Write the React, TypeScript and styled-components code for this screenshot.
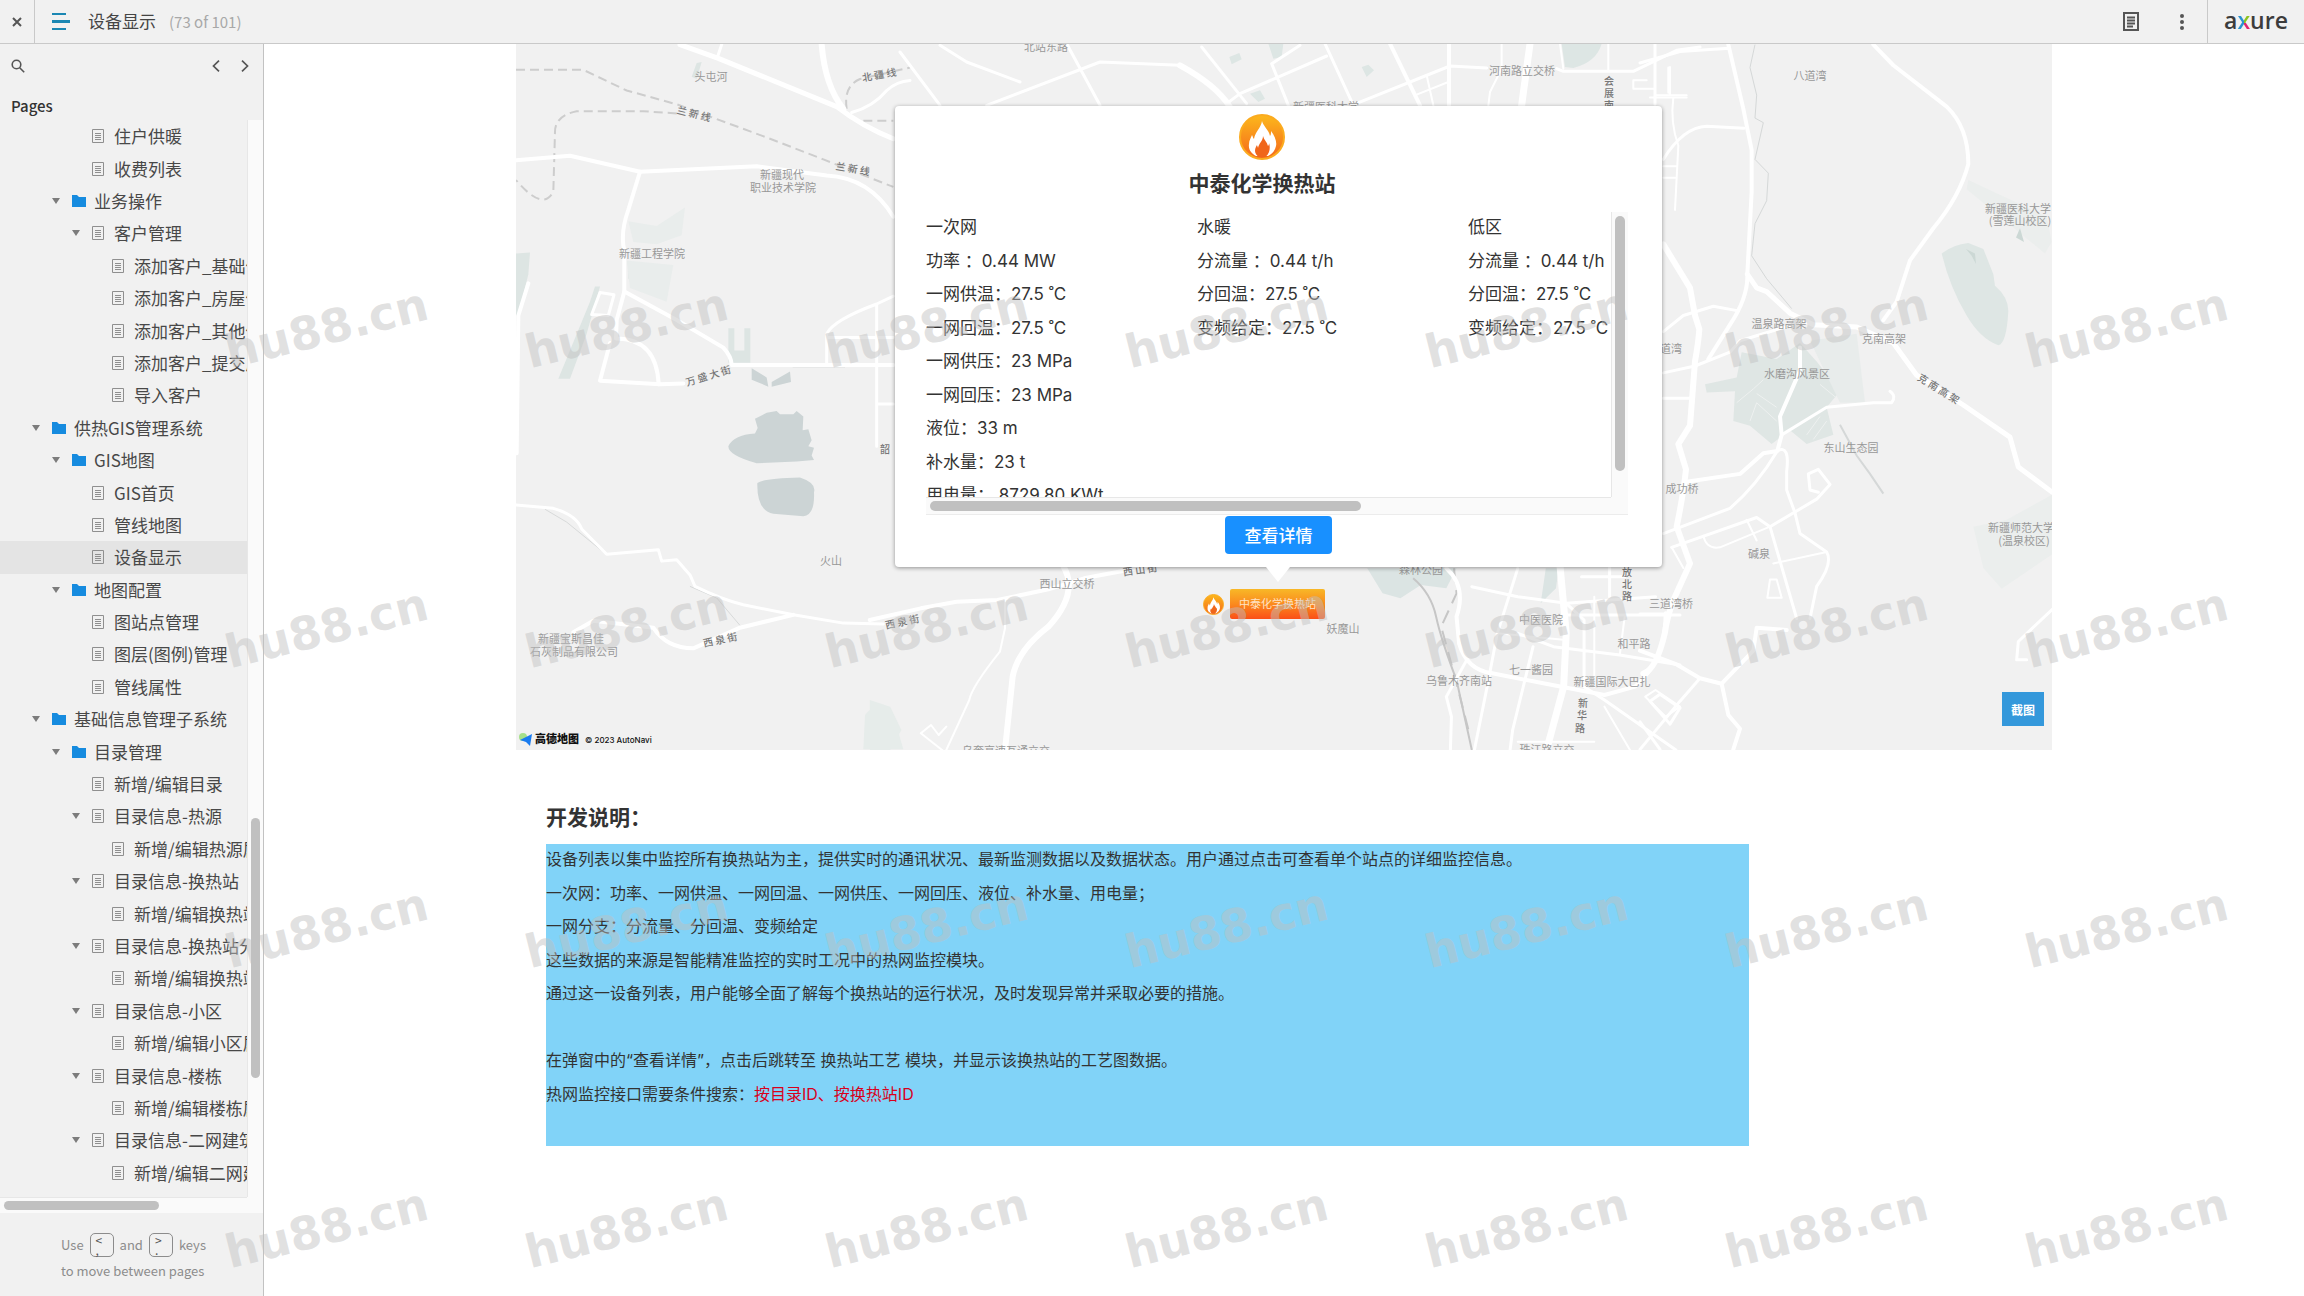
import React from "react";
import styled, { createGlobalStyle } from "styled-components";

const ui = `"Noto Sans CJK SC", "Noto Sans", sans-serif`;
const body = `Inter, "Noto Sans CJK SC", sans-serif`;

const Global = createGlobalStyle`
  *, *::before, *::after { box-sizing: border-box; }
  html, body { margin: 0; padding: 0; }
  body { background: #fff; color: #333; font-family: ${body}; }
  button { border: 0; padding: 0; margin: 0; background: none; font: inherit; color: inherit; cursor: pointer; }
  a { color: inherit; text-decoration: none; }
  h1, h2, h3, p, ul { margin: 0; padding: 0; }
  ul { list-style: none; }
  svg { display: block; }
`;

const Shell = styled.div`
  position: relative;
  display: flex;
  flex-direction: column;
  height: 100vh;
  overflow: hidden;
`;

/* ---------- top bar ---------- */
const TopBar = styled.header`
  display: flex;
  flex: none;
  height: 44px;
  background: #f1f1f1;
  border-bottom: 1px solid #c9c9c9;
  font-family: ${ui};
`;
const CloseButton = styled.button`
  width: 35px;
  display: grid;
  place-items: center;
  border-right: 1px solid #c9c9c9;
`;
const MenuButton = styled.button`
  display: grid;
  place-items: center;
  padding: 0 18px 0 17px;
`;
const PageTitle = styled.h1`
  font-size: 17px;
  line-height: 42px;
  font-weight: 400;
  color: #444;
`;
const PageCount = styled.span`
  margin-left: 13px;
  font-size: 15px;
  line-height: 44px;
  color: #a8a8a8;
`;
const Spacer = styled.div`
  flex: 1;
`;
const BarButton = styled.button`
  width: 51px;
  display: grid;
  place-items: center;
`;
const Logo = styled.a`
  width: 97px;
  border-left: 1px solid #c9c9c9;
  text-align: center;
  font-family: "Open Sans", sans-serif;
  font-size: 23px;
  line-height: 40px;
  font-weight: 600;
  color: #3c3c3c;
`;
const LogoMark = styled.span`
  color: transparent;
  background: conic-gradient(from 0deg at 50% 60%, #8cc220 0 90deg, #e0246f 90deg 180deg, #2a93cf 180deg);
  -webkit-background-clip: text;
  background-clip: text;
`;

/* ---------- sidebar ---------- */
const Columns = styled.div`
  flex: 1;
  min-height: 0;
  display: flex;
`;
const Sidebar = styled.aside`
  flex: none;
  width: 264px;
  display: flex;
  flex-direction: column;
  background: #f1f1f1;
  border-right: 1px solid #c2c2c2;
  font-family: ${ui};
  color: #484848;
`;
const Tools = styled.div`
  display: flex;
  align-items: center;
  height: 44px;
  margin-bottom: 3px;
  padding: 0 14px 0 11px;
`;
const IconButton = styled.button`
  display: grid;
  place-items: center;
  margin-left: 18px;
  &:first-child { margin-left: 0; }
`;
const SideHeading = styled.h2`
  padding-left: 11px;
  font-size: 15px;
  line-height: 29px;
  font-weight: 500;
  color: #333;
`;
const TreePane = styled.div`
  flex: 1;
  min-height: 0;
  display: grid;
  grid-template-columns: minmax(0, 1fr) 16px;
  grid-template-rows: minmax(0, 1fr) 16px;
`;
const Tree = styled.ul`
  display: grid;
  grid-auto-rows: minmax(0, 1fr);
  min-height: 0;
  padding-bottom: 8px;
  overflow: hidden;
`;
const Row = styled.li<{ $level: number; $active?: boolean }>`
  display: flex;
  align-items: center;
  padding-left: ${(p) => 12 + p.$level * 20}px;
  background: ${(p) => (p.$active ? "#e4e4e4" : "transparent")};
  overflow: hidden;
  white-space: nowrap;
`;
const Toggle = styled.button`
  width: 20px;
  flex: none;
`;
const TogglePlace = styled.span`
  width: 20px;
  flex: none;
`;
const PageLink = styled.a`
  display: flex;
  align-items: center;
  font-size: 17px;
  line-height: 32px;
`;
const RowIcon = styled.span`
  width: 22px;
  flex: none;
`;
const Track = styled.div<{ $dir: "v" | "h" }>`
  display: flex;
  flex-direction: ${(p) => (p.$dir === "v" ? "column" : "row")};
  background: #fafafa;
  border: 0 solid #e7e7e7;
  ${(p) => (p.$dir === "v" ? "border-left-width: 1px; padding: 4px 3px;" : "border-top-width: 1px; padding: 3px 4px;")}
`;
const Thumb = styled.div<{ $size: number }>`
  flex: ${(p) => p.$size};
  border-radius: 5px;
  background: #c0c0c0;
`;
const Gap = styled.div<{ $size: number }>`
  flex: ${(p) => p.$size};
`;
const Corner = styled.div`
  background: #fafafa;
`;
const Hint = styled.p`
  height: 83px;
  padding: 19px 0 0 61px;
  font-size: 13px;
  line-height: 26px;
  color: #8c8c8c;
`;
const HintLine = styled.span`
  display: flex;
  align-items: center;
  gap: 6px;
`;
const Key = styled.kbd`
  display: flex;
  flex-direction: column;
  width: 24px;
  height: 24px;
  padding: 1px 0 0 5px;
  border: 1px solid #8c8c8c;
  border-radius: 5px;
  font-family: ${ui};
  font-size: 12px;
  line-height: 10px;
  color: #555;
`;

/* ---------- page ---------- */
const Page = styled.main`
  flex: 1;
  min-width: 0;
  overflow: hidden;
`;
const Canvas = styled.div`
  width: 100%;
  max-width: 1536px;
  margin: 0 auto;
`;
const MapArea = styled.section`
  position: relative;
  height: 706px;
  overflow: hidden;
  background: #f1f1f1;
`;
const Popup = styled.article`
  position: absolute;
  left: 379px;
  top: 62px;
  width: 767px;
  height: 461px;
  padding: 8px 31px 0;
  display: flex;
  flex-direction: column;
  align-items: center;
  background: #fff;
  border-radius: 4px;
  box-shadow: 0 1px 4px rgba(0, 0, 0, 0.4);
  &::after {
    content: "";
    position: absolute;
    left: 50%;
    top: 100%;
    margin-left: -13px;
    border: 12px solid transparent;
    border-top: 15px solid #fff;
    border-bottom: 0;
  }
`;
const PopupHead = styled.header`
  display: flex;
  flex-direction: column;
  align-items: center;
  align-self: stretch;
  padding-right: 33px;
  height: 98px;
`;
const StationName = styled.h2`
  font-size: 21px;
  line-height: 48px;
  font-weight: 700;
`;
const Readings = styled.div`
  align-self: stretch;
  margin-right: 3px;
  display: grid;
  grid-template-columns: minmax(0, 1fr) 17px;
  grid-template-rows: 285px 17px;
  border-bottom: 1px solid #ececec;
`;
const Groups = styled.div`
  display: grid;
  grid-template-columns: 271px 271px 271px;
  overflow: hidden;
`;
const Group = styled.ul`
  display: grid;
  grid-template-rows: repeat(9, 1fr);
  height: 302px;
  font-size: 17px;
  line-height: 31px;
  white-space: pre;
`;
const DetailButton = styled.button`
  margin-top: 1px;
  width: 107px;
  flex: none;
  height: 38px;
  padding-bottom: 2px;
  border-radius: 4px;
  background: #1890ff;
  color: #fff;
  font-size: 17px;
  font-weight: 500;
`;
const Marker = styled.div`
  position: absolute;
  left: 687px;
  top: 545px;
  display: flex;
  align-items: center;
  gap: 6px;
`;
const MarkerLabel = styled.span`
  width: 95px;
  line-height: 30px;
  text-align: center;
  border-radius: 2px;
  background: linear-gradient(#f8b827, #fb8a1e 50%, #fb4f17);
  color: #ffe3c4;
  font-size: 11px;
`;
const CaptureButton = styled.button`
  position: absolute;
  right: 8px;
  bottom: 24px;
  width: 42px;
  height: 34px;
  background: #3498db;
  color: #fff;
  font-size: 12px;
  font-weight: 700;
`;
const Notes = styled.section`
  padding: 46px 0 0 30px;
`;
const NotesTitle = styled.h2`
  font-size: 21px;
  line-height: 44px;
  font-weight: 700;
  margin-bottom: 4px;
`;
const NotesBody = styled.div`
  display: grid;
  grid-template-rows: repeat(9, 1fr);
  max-width: 1203px;
  height: 302px;
  background: #81d3f8;
  font-size: 16px;
  line-height: 31px;
`;
const Alert = styled.span`
  color: #d9001b;
`;

/* ---------- watermark ---------- */
const Marks = styled.div`
  position: absolute;
  inset: 178px 0 0 176px;
  overflow: hidden;
  display: grid;
  grid-template-columns: repeat(auto-fill, 300px);
  grid-auto-rows: 300px;
  place-items: center;
  pointer-events: none;
`;
const Mark = styled.span`
  font-family: "DejaVu Sans", sans-serif;
  font-size: 46px;
  font-weight: 700;
  line-height: 1;
  color: rgba(192, 192, 192, 0.48);
  transform: rotate(-14deg);
`;

/* ---------- icons ---------- */
const PageGlyph = () => (
  <svg width="12" height="14" viewBox="0 0 12 14" fill="none" stroke="#8f8f8f">
    <path d="M.5.5h11v13H.5zM3 4.5h6M3 6.5h6M3 8.5h6M3 10.5h6" />
  </svg>
);
const FolderGlyph = () => (
  <svg width="14" height="12" viewBox="0 0 14 12" fill="#168bdf">
    <path d="M0 0h5l2 2h7v10H0z" />
  </svg>
);
const ArrowGlyph = () => (
  <svg width="8" height="6" viewBox="0 0 8 6" fill="#7c7c7c">
    <path d="M0 0h8L4 6z" />
  </svg>
);
const Flame = ({ size, id }: { size: number; id: string }) => (
  <svg width={size} height={size} viewBox="0 0 46 46">
    <defs>
      <linearGradient id={id} x1="0" y1="0" x2="0" y2="1">
        <stop offset="0" stopColor="#fcb81c" />
        <stop offset="1" stopColor="#f5671c" />
      </linearGradient>
    </defs>
    <circle cx="23" cy="23" r="22" fill={`url(#${id})`} stroke="#fbab1f" strokeWidth="2" />
    <path
      fill="#fff"
      d="M23 7c1 5 7 9 8 15 1-1 1-3 1-5 4 5 6 11 5 15-1 5-4 8-8 10H17c-4-2-8-6-7-12 0-4 2-6 3-9 1 2 1 3 2 4 1-7 7-11 8-18z"
    />
    <path
      fill="#f0661b"
      d="M24 22c1 4 4 6 5 10 1-1 1-2 1-3 1 3 1 6 0 9-1 2-2 4-4 5h-6c-2-1-4-4-4-6 0-3 1-4 2-6 0 1 1 2 1 3 1-5 5-7 5-12z"
    />
  </svg>
);

/* ---------- map drawing ---------- */
type Stroke = [string, number];
const westRoads: Stroke[] = [
  ["M510 10L625 40L980 145Q1060 190 1150 215", 5],
  ["M935 10Q945 100 1000 150", 6],
  ["M635 10L622 38M1025 158Q1090 145 1130 110Q1160 90 1200 88", 3],
  ["M18 262L180 252L390 287L740 275L950 295Q1080 300 1150 385", 4],
  ["M390 287L355 370Q330 420 343 460V548L320 610L318 650Q440 650 446 750", 4],
  ["M343 548L500 610L640 670Q665 690 665 708H1150", 4],
  ["M300 660L270 742L450 750L520 748", 4],
  ["M270 550L312 555L295 600L245 598Z", 3],
  ["M950 708V640Q970 610 1100 575L1150 558M950 648H1150M1100 575V885M1100 793H1150", 3],
  ["M55 530L25 600L20 900", 4],
  ["M18 1013L130 1020Q200 1035 215 1065L290 1120L445 1110L455 1135L500 1132L540 1165L555 1190Q640 1220 700 1230L850 1252L1000 1270L1120 1272", 3],
  ["M190 1290L250 1265L430 1280Q470 1325 550 1325L690 1280L850 1252", 4],
];
const eastRoads: Stroke[] = [
  ["M0 50L120 25L268 18M45 10V140", 3],
  ["M265 10L310 150L335 240V330L322 510Q325 560 270 620L205 695", 4],
  ["M70 260Q130 190 200 188L312 192", 3],
  ["M85 60V115M30 125H140M100 125Q90 180 115 230L105 370M70 275H110M70 300H105", 2],
  ["M700 10L760 55L920 145Q985 190 985 270Q960 340 880 410L810 480L770 570L730 610", 4],
  ["M322 510L350 540L380 548L450 595L520 620L650 625L760 660L830 730L970 795L1110 865L1135 930L1237 985", 5],
  ["M70 445L150 540L165 600L178 630Q175 660 165 700L150 840L115 880L138 935Q130 990 110 1060L150 1140L100 1220Q80 1260 75 1290Q50 1370 10 1380", 6],
  ["M70 725L165 710L270 680L300 655L460 620M70 635L130 600L220 580L295 590M70 780H150", 3],
  ["M480 670V720L420 820L425 860L412 895L370 900L300 945L140 962", 4],
  ["M425 860L560 800L700 790L755 790Q770 775 750 765", 3],
  ["M412 895Q350 970 270 1020L70 1075M412 895Q450 880 440 940V980L465 1030L480 1075L560 1115Q580 1140 530 1190L510 1260", 3],
  ["M95 1105L350 1040L390 1060L470 1260M390 1060L530 1000L570 968L535 935L505 945L510 980L535 985", 3],
  ["M190 1080Q200 1110 240 1105L390 1060M400 1140L560 1115M390 1175H410L425 1215H382ZM320 1045L350 1090M95 1105L130 1150", 2],
  ["M440 1285L350 1280L340 1330L245 1402L265 1470L300 1500L280 1545M0 1330L110 1360L180 1390L245 1402", 4],
  ["M180 1390L120 1440L0 1545M30 1440L60 1425L120 1455L90 1490ZM0 1485L60 1545M0 1250H75", 3],
  ["M1237 1240L1135 1310L1130 1350L1160 1350", 3],
];
const southRoads: Stroke[] = [
  ["M-20 360L80 325L150 305L230 300L330 268L400 235L520 200", 4],
  ["M360 200Q390 280 330 380Q270 450 260 530L245 750", 6],
  ["M245 300V385L235 455Q180 560 175 600L130 750M130 680L115 705L100 675L80 700L130 760", 2],
  ["M1110 205Q1150 260 1130 350L1135 430Q1150 510 1200 520L1300 550L1420 585L1480 560Q1540 480 1540 340", 4],
  ["M1160 260L1250 290L1345 310L1520 290M1345 345H1568M1375 230H1460M1430 200V290", 3],
  ["M1333 200L1345 400L1340 560L1310 730", 7],
  ["M1250 205L1210 400L1190 560L1165 750M1150 480L1110 590L1120 650L1118 750", 3],
  ["M1345 310L1380 360V560L1420 600L1560 750M1250 400L1320 440L1450 465L1568 495M1280 440L1240 690L1235 750", 3],
  ["M1400 290V560M1460 345L1450 465M1210 400L1345 420M1250 725H1400M1420 620L1470 750M1500 590L1520 570L1568 620L1540 650Z", 2],
];
const northRoads: Stroke[] = [
  ["M5 15L140 185", 3],
  ["M-60 70Q50 130 90 195", 6],
  ["M300 10L215 65L265 190M80 185L120 155L380 42", 3],
  ["M375 5L460 190M455 190L750 72L860 78M1070 80L1090 88H1300L1430 25L1500 15", 3],
  ["M570 5L660 190M747 5V190", 4],
  ["M680 100L700 190M650 158L745 120M905 5V80L870 150L865 190M1225 5V85M1080 5L1090 80", 2],
  ["M990 5L965 190", 7],
  ["M1300 140V115H1340M1300 140H1365M1410 75V155M1365 160H1460", 2],
  ["M-780 10L-700 60L-540 120M-900 30L-780 190M-400 5L-300 190M-640 190L-300 60L-60 70", 3],
];

const Roads = ({ set }: { set: Stroke[] }) => (
  <g fill="none" stroke="#fff" strokeLinejoin="round" strokeLinecap="round">
    {set.map(([d, w]) => (
      <path key={d} d={d} strokeWidth={w} vectorEffect="non-scaling-stroke" />
    ))}
  </g>
);

/* text, centre x, centre y, angle, dark */
type Place = [string, number, number, number?, boolean?];
const places: Place[] = [
  ["头屯河", 711, 76],
  ["兰 新 线", 694, 113, 14, true],
  ["兰 新 线", 853, 168, 10, true],
  ["北 疆 线", 879, 74, -10, true],
  ["新疆现代", 782, 174],
  ["职业技术学院", 783, 187],
  ["新疆工程学院", 652, 253],
  ["万 盛 大 街", 708, 375, -17, true],
  ["韶", 885, 448, 0, true],
  ["火山", 831, 560],
  ["西 泉 街", 720, 639, -12, true],
  ["西 泉 街", 902, 621, -12, true],
  ["新疆宝斯昌佳", 571, 638],
  ["石灰制品有限公司", 574, 651],
  ["北站东路", 1046, 46],
  ["河南路立交桥", 1522, 70],
  ["新疆医科大学", 1326, 106],
  ["八道湾", 1810, 75],
  ["新疆医科大学", 2018, 208],
  ["(雪莲山校区)", 2020, 220],
  ["温泉路高架", 1779, 323],
  ["克南高架", 1884, 338],
  ["克 南 高 架", 1939, 388, 32, true],
  ["水磨沟风景区", 1797, 373],
  ["道湾", 1671, 348],
  ["东山生态园", 1851, 447],
  ["成功桥", 1682, 488],
  ["碱泉", 1759, 553],
  ["新疆师范大学", 2021, 527],
  ["(温泉校区)", 2024, 540],
  ["西山立交桥", 1067, 583],
  ["西 山 街", 1140, 569, -8, true],
  ["森林公园", 1421, 569],
  ["妖魔山", 1343, 628],
  ["中医医院", 1541, 619],
  ["七一酱园", 1531, 669],
  ["乌鲁木齐南站", 1459, 680],
  ["新疆国际大巴扎", 1612, 681],
  ["和平路", 1634, 643],
  ["三道湾桥", 1671, 603],
  ["乌奎高速互通立交", 1006, 750],
  ["珠江路立交", 1547, 749],
  ["会", 1609, 80, 0, true],
  ["展", 1609, 92, 0, true],
  ["南", 1609, 104, 0, true],
  ["放", 1627, 571, 0, true],
  ["北", 1627, 583, 0, true],
  ["路", 1627, 595, 0, true],
  ["新", 1583, 702, 0, true],
  ["华", 1582, 714, 0, true],
  ["路", 1580, 727, 0, true],
];

const MapSvg = styled.svg`
  width: 100%;
  height: 100%;
  text {
    font-family: "Noto Sans CJK SC", sans-serif;
    text-anchor: middle;
    dominant-baseline: central;
  }
`;
const MapLabel = styled.text<{ $dark?: boolean }>`
  fill: ${(p) => (p.$dark ? "#777" : "#989898")};
  font-size: ${(p) => (p.$dark ? 10 : 11)}px;
  font-weight: ${(p) => (p.$dark ? 500 : 400)};
`;

const MapDrawing = () => (
  <MapSvg viewBox="516 44 1536 706" preserveAspectRatio="xMidYMid slice" role="img" aria-label="地图">
    <g transform="translate(510 40) scale(.33333 .45914)">
      <g fill="#dde5e3">
        <path d="M255 537H270L230 640L180 738H145L240 570Z" />
        <path d="M18 465L60 463L55 510L25 600H18Z" />
        <path d="M655 628h18v48h30v-48h18v75h-66z" />
        <path d="M355 495H450V535H410V520H355Z" />
        <path d="M545 80L560 50L575 48L560 85Z" />
      </g>
      <path fill="#e9edec" d="M355 395L440 405L525 365L515 425L440 445L370 440ZM350 480L490 490L470 570L360 540Z" />
      <path fill="#e6ecea" d="M1060 1545L1065 1470Q1110 1430 1150 1470L1180 1545Z" />
      <g fill="#ccd4d5">
        <path d="M655 885Q670 860 735 857L743 845L735 825L770 812L800 808L810 815H850L860 808L880 820L878 850L895 848L905 872L895 885L912 888L905 905L912 915L860 918L740 922Q655 905 655 885Z" />
        <path d="M742 965Q760 955 870 953Q920 965 912 985Q915 1035 880 1037L790 1032Q740 1025 742 965Z" />
        <path d="M725 715L770 735L775 755L725 740ZM785 745L840 722L843 745L785 755Z" />
      </g>
      <g fill="none" stroke="#cdcdcd" strokeWidth="2">
        <path vectorEffect="non-scaling-stroke" strokeDasharray="9 5" d="M18 65H220L350 110L500 140L780 215L940 260L1150 320" />
        <path vectorEffect="non-scaling-stroke" strokeDasharray="9 5" d="M500 160L400 155H200Q135 165 135 200L130 330Q100 375 18 305" />
        <path vectorEffect="non-scaling-stroke" strokeDasharray="9 5" d="M1010 150Q1000 100 1050 85L1200 60M1060 176H1150" />
      </g>
      <path fill="none" stroke="#d8dada" vectorEffect="non-scaling-stroke" d="M105 1022L170 1050L285 1118M540 1190L620 1215L690 1275M848 712H1005" />
      <Roads set={westRoads} />
    </g>
    <g transform="translate(1640 40) scale(.33333 .45914)">
      <path fill="#dfe6e4" d="M195 750L290 735L305 680L410 695L480 660L530 700L600 765L560 800L580 860L500 880L450 850L395 880L330 840L280 830L285 765L200 768Z" />
      <path fill="#e8eceb" d="M510 655L650 640L675 790H600Z" />
      <path fill="#dee6e4" d="M905 465Q940 445 985 442L1030 455L1060 510L1065 535Q1105 560 1105 590Q1100 660 1075 665Q1020 650 980 600Q930 540 905 465Z" />
      <path fill="#ebeeed" d="M985 305L1220 385L1235 440L1215 465L980 325ZM1000 1060L1100 1045L1237 990V1120L1085 1195L1030 1150Z" />
      <path fill="#ccd8d5" d="M1140 410L1152 440L1128 430ZM978 455L1005 465L1008 488L995 470Z" />
      <g fill="none" stroke="#d5d8d8">
        <path vectorEffect="non-scaling-stroke" d="M345 10L330 60L350 120L345 170L370 180L345 260L385 290L380 350L345 400L335 470L380 520L455 585" />
        <path vectorEffect="non-scaling-stroke" strokeWidth="2" d="M600 838L650 905L690 945L730 988" />
      </g>
      <g fill="none" stroke="#eef1f0">
        <path vectorEffect="non-scaling-stroke" d="M290 790L340 760L370 740M330 830L350 790L410 830M500 860L540 820M520 870L560 830M540 750L590 780M350 770L410 800" />
      </g>
      <Roads set={eastRoads} />
    </g>
    <g transform="translate(880 500) scale(.5102 .33333)">
      <path fill="#dbe4e3" d="M955 205H1130L1110 265L1060 255L1020 295L985 280ZM1305 205H1330L1325 265L1295 310Z" />
      <path fill="#e6ecea" d="M-20 600L20 620L42 690L20 750H-20Z" />
      <g fill="none" stroke="#c6c6c6" strokeWidth="2">
        <path vectorEffect="non-scaling-stroke" d="M1045 235Q1080 280 1090 350Q1100 420 1130 540L1160 750" />
        <path vectorEffect="non-scaling-stroke" strokeDasharray="14 8" d="M1125 205L1130 280L1100 380L1125 520L1155 700" />
      </g>
      <Roads set={southRoads} />
    </g>
    <g transform="translate(1200 42) scale(.33333)">
      <path fill="#dde6e4" d="M1085 5H1205Q1190 60 1120 78L1095 75ZM205 5H250L245 45L220 50ZM88 45L118 33L125 52L95 67ZM485 75L505 68L522 85L500 105ZM150 155L180 145L195 170L175 180Z" />
      <Roads set={northRoads} />
    </g>
    {places.map(([t, x, y, r = 0, dark], i) => (
      <MapLabel key={i} x={x} y={y} $dark={dark} transform={`rotate(${r} ${x} ${y})`}>
        {t}
      </MapLabel>
    ))}
    <circle cx="523" cy="737" r="4" fill="#a6e08a" />
    <path d="M520 740L532 734L530 746L526 742Z" fill="#1a7cf0" />
  </MapSvg>
);

const Credit = styled.p`
  position: absolute;
  left: 19px;
  bottom: 4px;
  display: flex;
  gap: 6px;
  font-family: Inter, "Noto Sans CJK SC", sans-serif;
  font-size: 8px;
  line-height: 12px;
  font-weight: 500;
  color: #111;
`;
const CreditName = styled.strong`
  font-size: 11px;
  line-height: 10px;
  font-weight: 900;
`;

/* ---------- data ---------- */
type Node = { t: string; l: number; open?: boolean; folder?: boolean; active?: boolean };
const f = (t: string, l: number): Node => ({ t, l, open: true, folder: true });
const o = (t: string, l: number): Node => ({ t, l, open: true });
const p = (t: string, l: number, active = false): Node => ({ t, l, active });
const nodes: Node[] = [
  p("住户供暖", 3), p("收费列表", 3), f("业务操作", 2), o("客户管理", 3),
  p("添加客户_基础信息", 4), p("添加客户_房屋信息", 4), p("添加客户_其他信息", 4), p("添加客户_提交成功", 4),
  p("导入客户", 4), f("供热GIS管理系统", 1), f("GIS地图", 2), p("GIS首页", 3), p("管线地图", 3),
  p("设备显示", 3, true), f("地图配置", 2), p("图站点管理", 3), p("图层(图例)管理", 3), p("管线属性", 3),
  f("基础信息管理子系统", 1), f("目录管理", 2), p("新增/编辑目录", 3), o("目录信息-热源", 3),
  p("新增/编辑热源属性", 4), o("目录信息-换热站", 3), p("新增/编辑换热站属性", 4), o("目录信息-换热站分支", 3),
  p("新增/编辑换热站分支", 4), o("目录信息-小区", 3), p("新增/编辑小区属性", 4), o("目录信息-楼栋", 3),
  p("新增/编辑楼栋属性", 4), o("目录信息-二网建筑", 3), p("新增/编辑二网建筑", 4),
];
const groups = [
  ["一次网", "功率 ：0.44 MW", "一网供温：27.5 ˚C", "一网回温：27.5 ˚C", "一网供压：23 MPa", "一网回压：23 MPa", "液位：33 m", "补水量：23 t", "用电量： 8729.80 KWt"],
  ["水暖", "分流量 ：0.44 t/h", "分回温：27.5 ˚C", "变频给定：27.5 ˚C"],
  ["低区", "分流量 ：0.44 t/h", "分回温：27.5 ˚C", "变频给定：27.5 ˚C"],
];
const notes = [
  "设备列表以集中监控所有换热站为主，提供实时的通讯状况、最新监测数据以及数据状态。用户通过点击可查看单个站点的详细监控信息。",
  "一次网：功率、一网供温、一网回温、一网供压、一网回压、液位、补水量、用电量；",
  "一网分支：分流量、分回温、变频给定",
  "这些数据的来源是智能精准监控的实时工况中的热网监控模块。",
  "通过这一设备列表，用户能够全面了解每个换热站的运行状况，及时发现异常并采取必要的措施。",
  "",
  "在弹窗中的“查看详情”，点击后跳转至 换热站工艺 模块，并显示该换热站的工艺图数据。",
];

const Bar = ({ dir, before, size, after }: { dir: "v" | "h"; before: number; size: number; after: number }) => (
  <Track $dir={dir}>
    {before > 0 && <Gap $size={before} />}
    <Thumb $size={size} />
    <Gap $size={after} />
  </Track>
);

export default function App() {
  return (
    <Shell>
      <Global />
      <TopBar>
        <CloseButton aria-label="关闭">
          <svg width="10" height="10" viewBox="0 0 10 10" stroke="#555" strokeWidth="2"><path d="M1 1l8 8M9 1L1 9" /></svg>
        </CloseButton>
        <MenuButton aria-label="菜单">
          <svg width="18" height="17" viewBox="0 0 18 17" fill="#1b87b3"><path d="M0 0h14v2H0zM0 7h18v3H0zM0 15h14v2H0z" /></svg>
        </MenuButton>
        <PageTitle>设备显示</PageTitle>
        <PageCount>(73 of 101)</PageCount>
        <Spacer />
        <BarButton aria-label="备注">
          <svg width="16" height="19" viewBox="0 0 16 19" fill="none" stroke="#555" strokeWidth="2"><path d="M1 1h14v17H1zM4 5.5h8M4 8.5h8M4 11.5h8M4 14.5h6" /></svg>
        </BarButton>
        <BarButton aria-label="更多">
          <svg width="4" height="16" viewBox="0 0 4 16" fill="#555"><circle cx="2" cy="2" r="2" /><circle cx="2" cy="8" r="2" /><circle cx="2" cy="14" r="2" /></svg>
        </BarButton>
        <Logo href="#">a<LogoMark>x</LogoMark>ure</Logo>
      </TopBar>
      <Columns>
        <Sidebar>
          <Tools>
            <IconButton aria-label="搜索">
              <svg width="14" height="14" viewBox="0 0 14 14" fill="none" stroke="#555" strokeWidth="1.6"><circle cx="5.5" cy="5.5" r="4.3" /><path d="M8.7 8.7l4.5 4.5" /></svg>
            </IconButton>
            <Spacer />
            <IconButton aria-label="上一页">
              <svg width="14" height="12" viewBox="0 0 14 12" fill="none" stroke="#555" strokeWidth="1.7"><path d="M10 .7L4.500 6l5.500 5.300" /></svg>
            </IconButton>
            <IconButton aria-label="下一页">
              <svg width="8" height="12" viewBox="0 0 8 12" fill="none" stroke="#555" strokeWidth="1.7"><path d="M1 .7L6.500 6L1 11.300" /></svg>
            </IconButton>
          </Tools>
          <SideHeading>Pages</SideHeading>
          <TreePane>
            <Tree>
              {nodes.map((n, i) => (
                <Row key={i} $level={n.l} $active={n.active}>
                  {n.open ? <Toggle aria-label="折叠"><ArrowGlyph /></Toggle> : <TogglePlace />}
                  <PageLink href="#">
                    <RowIcon>{n.folder ? <FolderGlyph /> : <PageGlyph />}</RowIcon>
                    {n.t}
                  </PageLink>
                </Row>
              ))}
            </Tree>
            <Bar dir="v" before={693} size={260} after={115} />
            <Bar dir="h" before={0} size={155} after={84} />
            <Corner />
          </TreePane>
          <Hint>
            <HintLine>
              Use <Key><span>&lt;</span><span>,</span></Key> and <Key><span>&gt;</span><span>.</span></Key> keys
            </HintLine>
            to move between pages
          </Hint>
        </Sidebar>
        <Page>
          <Canvas>
            <MapArea>
              <MapDrawing />
              <Credit><CreditName>高德地图</CreditName><span>© 2023 AutoNavi</span></Credit>
              <Marker>
                <Flame size={21} id="flame-s" />
                <MarkerLabel>中泰化学换热站</MarkerLabel>
              </Marker>
              <Popup>
                <PopupHead>
                  <Flame size={46} id="flame-l" />
                  <StationName>中泰化学换热站</StationName>
                </PopupHead>
                <Readings>
                  <Groups>
                    {groups.map((g) => (
                      <Group key={g[0]}>{g.map((r) => <li key={r}>{r}</li>)}</Group>
                    ))}
                  </Groups>
                  <Bar dir="v" before={0} size={255} after={22} />
                  <Bar dir="h" before={0} size={431} after={246} />
                  <Corner />
                </Readings>
                <DetailButton>查看详情</DetailButton>
              </Popup>
              <CaptureButton>截图</CaptureButton>
            </MapArea>
            <Notes>
              <NotesTitle>开发说明：</NotesTitle>
              <NotesBody>
                {notes.map((n, i) => <p key={i}>{n}</p>)}
                <p>热网监控接口需要条件搜索：<Alert>按目录ID、按换热站ID</Alert></p>
              </NotesBody>
            </Notes>
          </Canvas>
        </Page>
      </Columns>
      <Marks aria-hidden="true">
        {Array.from({ length: 28 }, (_, i) => <Mark key={i}>hu88.cn</Mark>)}
      </Marks>
    </Shell>
  );
}
